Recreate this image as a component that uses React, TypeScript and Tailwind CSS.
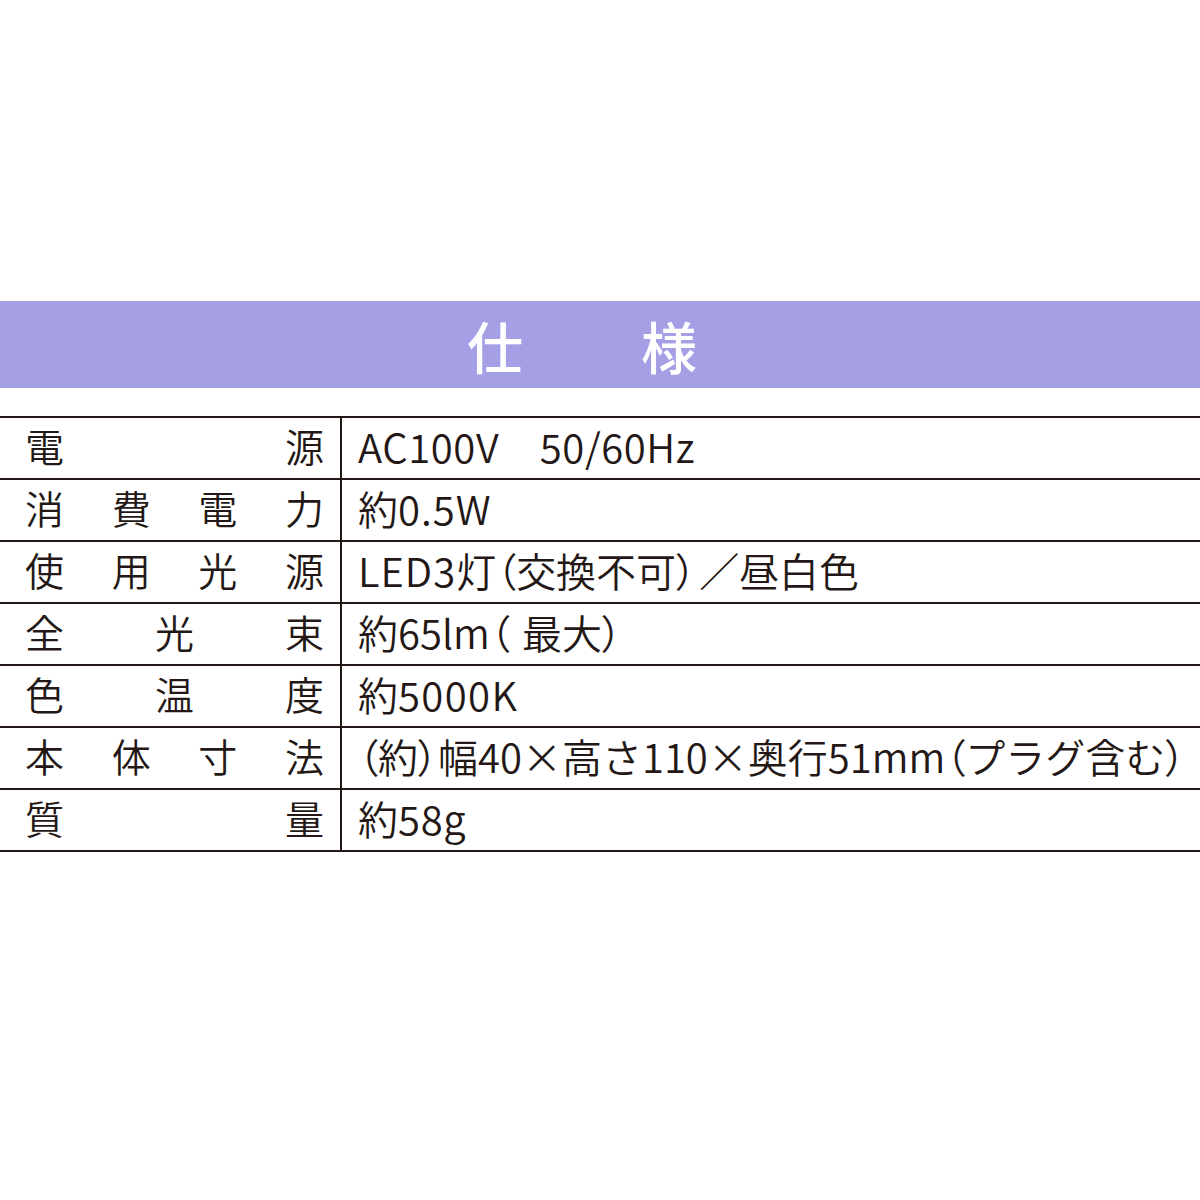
import React from "react";

type Seg = [string, string];

const P = "[font-feature-settings:'palt']";

const rows: { label: string[]; value: Seg[] }[] = [
  { label: ["電", "源"], value: [["AC100V　50/60Hz", "tracking-[0.6px]"]] },
  { label: ["消", "費", "電", "力"], value: [["約", ""], ["0.5W", "tracking-[1px]"]] },
  {
    label: ["使", "用", "光", "源"],
    value: [
      ["LED3", "tracking-[1px]"],
      ["灯", ""],
      ["（", P],
      ["交換不可", ""],
      ["）", P + " mr-[3px]"],
      ["／昼白色", ""],
    ],
  },
  {
    label: ["全", "光", "束"],
    value: [
      ["約65lm", ""],
      ["（", P + " mr-[12px]"],
      ["最大", ""],
      ["）", P],
    ],
  },
  { label: ["色", "温", "度"], value: [["約", ""], ["5000K", "tracking-[1.4px]"]] },
  {
    label: ["本", "体", "寸", "法"],
    value: [
      ["（", P],
      ["約", ""],
      ["）", P],
      ["幅40×高さ110×奥行51mm", ""],
      ["（", P],
      ["プラグ含む", ""],
      ["）", P],
    ],
  },
  { label: ["質", "量"], value: [["約", ""], ["58g", "tracking-[0.7px]"]] },
];

export default function App() {
  return (
    <div
      className="w-[1200px] h-[1200px] bg-white text-[#231815] overflow-hidden"
      style={{ fontFamily: '"Noto Sans CJK JP", "Noto Sans", sans-serif' }}
    >
      <div className="h-[301px]" />
      <div className="h-[87px] bg-[#a59fe6] flex items-center justify-center pr-[34px]">
        <span className="text-white text-[56px] font-medium leading-none whitespace-pre tracking-[2px]">
          仕　　様
        </span>
      </div>
      <div className="h-[28px]" />
      <div className="border-t-2 border-[#231815]">
        {rows.map((r, i) => (
          <div key={i} className="flex h-[62px] border-b-2 border-[#231815]">
            <div className="w-[340px] flex items-center justify-between pl-[25px] pr-[16px] pb-[5px] text-[39px] font-[350] leading-none">
              {r.label.map((c, j) => (
                <span key={j}>{c}</span>
              ))}
            </div>
            <div className="w-[2px] bg-[#231815]" />
            <div className="flex-1 flex items-center pl-[16px] pb-[5px] text-[40px] font-[350] leading-none whitespace-pre">
              {r.value.map(([t, cls], j) => (
                <span key={j} className={cls}>
                  {t}
                </span>
              ))}
            </div>
          </div>
        ))}
      </div>
    </div>
  );
}
